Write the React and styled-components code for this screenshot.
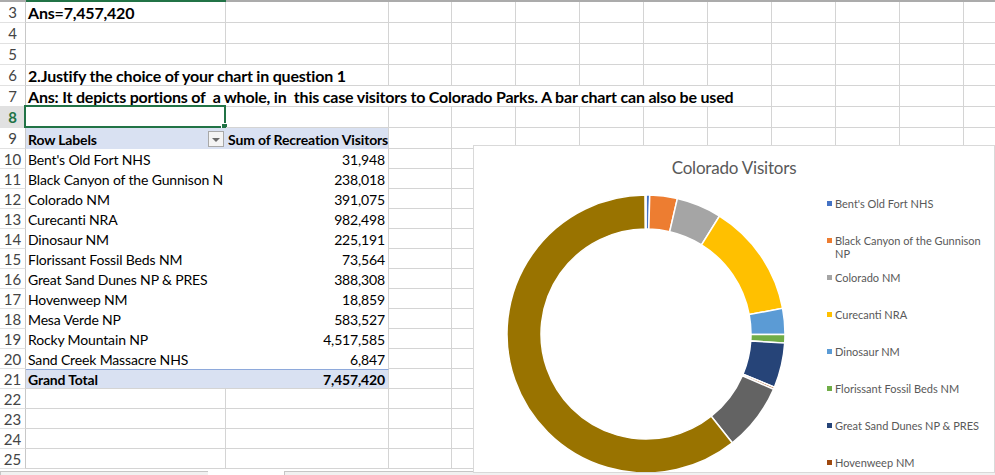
import React from "react";
import styled, { createGlobalStyle } from "styled-components";

const FONT = `"Lato", "Open Sans", sans-serif`;
const COLS = "26px 200px 163px 63px repeat(10, 64px)";
const TOTAL_COLS = 13;
const GRID = "#d4d4d4";
const GREEN = "#217346";
const PIVOT_BG = "#d9e1f2";

const GlobalStyle = createGlobalStyle`
	html, body {
		margin: 0;
		padding: 0;
		background: #ffffff;
	}
	body {
		font-family: ${FONT};
	}
`;

const SHEET = styled.div`
	position: relative;
	width: 995px;
	height: 475px;
	overflow: hidden;
	background: #ffffff;
	font-family: ${FONT};
	color: #000000;
`;

const HEADER_EDGE = styled.div`
	display: grid;
	grid-template-columns: ${COLS};
	height: 2px;
	background: #ababab;
`;

const HEADER_MARK = styled.div`
	grid-column: 2;
	background: ${GREEN};
`;

const ROW = styled.div`
	display: grid;
	grid-template-columns: ${COLS};
	height: ${(p) => p.$h}px;
`;

const ROW_NUM = styled.div`
	display: flex;
	align-items: center;
	justify-content: center;
	box-sizing: border-box;
	border-right: 1px solid #c8c8c8;
	border-bottom: 1px solid #e1e1e1;
	font-size: 15px;
	color: ${(p) => (p.$active ? GREEN : "#444444")};
	font-weight: ${(p) => (p.$active ? 700 : 400)};
	background: ${(p) => (p.$active ? "#e1e1e1" : "#ffffff")};
`;

const CELL = styled.div`
	position: relative;
	grid-column: span ${(p) => p.$span || 1};
	display: flex;
	align-items: center;
	justify-content: ${(p) => (p.$right ? "flex-end" : "space-between")};
	box-sizing: border-box;
	padding: 1px 3px 0 2px;
	white-space: nowrap;
	font-size: ${(p) => (p.$big ? 16 : 14)}px;
	font-weight: ${(p) => (p.$bold ? 700 : 400)};
	letter-spacing: ${(p) => (p.$big ? "-0.2px" : "-0.15px")};
	background: ${(p) => p.$bg || "transparent"};
	border-right: ${(p) => (p.$noRight ? "none" : `1px solid ${GRID}`)};
	border-bottom: ${(p) => (p.$noBottom ? "none" : `1px solid ${GRID}`)};
	border-top: ${(p) => (p.$top ? "1px solid #8ea9db" : "none")};
`;

const SELECTION = styled.div`
	position: absolute;
	left: -2px;
	top: -2px;
	right: -1px;
	bottom: -1px;
	border: 2px solid ${GREEN};
	pointer-events: none;

	&::after {
		content: "";
		position: absolute;
		right: -4px;
		bottom: -4px;
		width: 5px;
		height: 5px;
		background: ${GREEN};
		border: 1px solid #ffffff;
	}
`;

const FILTER_BTN = styled.span`
	display: flex;
	align-items: center;
	justify-content: center;
	width: 14px;
	height: 14px;
	margin-right: -1px;
	border: 1px solid #a8a8a8;
	background: #f4f4f4;

	&::before {
		content: "";
		border-left: 4px solid transparent;
		border-right: 4px solid transparent;
		border-top: 4px solid #6b6b6b;
		margin-top: 1px;
	}
`;

const FOOTER = styled.div`
	display: flex;
	gap: 76px;
	padding-top: 2px;
	height: 6px;
`;

const FOOTER_BAR = styled.div`
	width: ${(p) => (p.$w ? `${p.$w}px` : "auto")};
	flex: ${(p) => (p.$w ? "none" : "1")};
	border-top: 1px solid #c6c6c6;
	border-left: 1px solid #c6c6c6;
	background: #f1f1f1;
`;

/* chart */

const CHART = styled.div`
	position: absolute;
	left: 473px;
	top: 145px;
	width: 522px;
	height: 328px;
	box-sizing: border-box;
	border: 1px solid #d9d9d9;
	background: #ffffff;
	overflow: hidden;
	display: flex;
	flex-direction: column;
`;

const CHART_TITLE = styled.div`
	flex: none;
	height: 43px;
	display: flex;
	align-items: center;
	justify-content: center;
	font-size: 17px;
	color: #595959;
	letter-spacing: -0.2px;
`;

const CHART_BODY = styled.div`
	flex: none;
	display: flex;
	align-items: flex-start;
	height: 283px;
	overflow: hidden;
`;

const PLOT = styled.svg`
	flex: none;
	margin-left: 27px;
	overflow: visible;
`;

const LEGEND = styled.ul`
	list-style: none;
	margin: 0 0 0 36px;
	padding: 0;
	width: 156px;
`;

const LEGEND_ITEM = styled.li`
	display: flex;
	align-items: flex-start;
	height: 37px;
	box-sizing: border-box;
	padding-top: 8px;
	font-size: 11px;
	line-height: 13px;
	color: #595959;
`;

const SWATCH = styled.span`
	flex: none;
	width: 5px;
	height: 5px;
	margin: 4px 3px 0 0;
	background: ${(p) => p.$color};
`;

const parks = [
	["Bent's Old Fort NHS", 31948, "#4472c4"],
	["Black Canyon of the Gunnison N", 238018, "#ed7d31"],
	["Colorado NM", 391075, "#a5a5a5"],
	["Curecanti NRA", 982498, "#ffc000"],
	["Dinosaur NM", 225191, "#5b9bd5"],
	["Florissant Fossil Beds NM", 73564, "#70ad47"],
	["Great Sand Dunes NP & PRES", 388308, "#264478"],
	["Hovenweep NM", 18859, "#9e480e"],
	["Mesa Verde NP", 583527, "#636363"],
	["Rocky Mountain NP", 4517585, "#997300"],
	["Sand Creek Massacre NHS", 6847, "#698ed0"],
];

// the legend shows the full name of the second park; the chart area only has room for eight entries
const legendNames = [
	"Bent's Old Fort NHS",
	"Black Canyon of the Gunnison NP",
	"Colorado NM",
	"Curecanti NRA",
	"Dinosaur NM",
	"Florissant Fossil Beds NM",
	"Great Sand Dunes NP & PRES",
	"Hovenweep NM",
];

const fmt = (n) => n.toLocaleString("en-US");

function arc(cx, cy, r0, r1, a0, a1) {
	const pt = (r, a) => [cx + r * Math.sin(a), cy - r * Math.cos(a)];
	const large = a1 - a0 > Math.PI ? 1 : 0;
	const [x1, y1] = pt(r1, a0);
	const [x2, y2] = pt(r1, a1);
	const [x3, y3] = pt(r0, a1);
	const [x4, y4] = pt(r0, a0);
	return `M${x1} ${y1} A${r1} ${r1} 0 ${large} 1 ${x2} ${y2} L${x3} ${y3} A${r0} ${r0} 0 ${large} 0 ${x4} ${y4} Z`;
}

function Donut() {
	const total = parks.reduce((s, p) => s + p[1], 0);
	let a = 0;
	return (
		<PLOT width="290" height="290" viewBox="0 0 290 290">
			{parks.map(([name, v, color]) => {
				const a0 = a;
				a += (v / total) * Math.PI * 2;
				return (
					<path
						key={name}
						d={arc(145, 145, 105, 139, a0, a)}
						fill={color}
						stroke="#ffffff"
						strokeWidth="1.5"
					/>
				);
			})}
		</PLOT>
	);
}

function Row({ n, h = 20, active, children, used = 0 }) {
	const rest = Array.from({ length: TOTAL_COLS - used });
	return (
		<ROW $h={h}>
			<ROW_NUM $active={active}>{n}</ROW_NUM>
			{children}
			{rest.map((_, i) => (
				<CELL key={i} />
			))}
		</ROW>
	);
}

export default function App() {
	const total = parks.reduce((s, p) => s + p[1], 0);
	return (
		<SHEET>
			<GlobalStyle />
			<HEADER_EDGE>
				<div />
				<HEADER_MARK />
			</HEADER_EDGE>

			<Row n={3} h={21} used={1}>
				<CELL $bold $big>Ans=7,457,420</CELL>
			</Row>
			<Row n={4} h={21} />
			<Row n={5} h={21} />
			<Row n={6} h={21} used={2}>
				<CELL $bold $big $span={2}>2.Justify the choice of your chart in question 1</CELL>
			</Row>
			<Row n={7} h={21} used={8}>
				<CELL $bold $big $span={8}>
					Ans: It depicts portions of &nbsp;a whole, in &nbsp;this case visitors to Colorado Parks. A bar chart can also be used
				</CELL>
			</Row>
			<Row n={8} h={21} active used={1}>
				<CELL>
					<SELECTION />
				</CELL>
			</Row>
			<Row n={9} h={21} used={2}>
				<CELL $bold $bg={PIVOT_BG} $noRight $noBottom>
					Row Labels
					<FILTER_BTN />
				</CELL>
				<CELL $bold $bg={PIVOT_BG} $noBottom>Sum of Recreation Visitors</CELL>
			</Row>
			{parks.map(([name, v], i) => (
				<Row key={name} n={10 + i} used={2}>
					<CELL $noRight $noBottom>{name}</CELL>
					<CELL $right $noBottom>{fmt(v)}</CELL>
				</Row>
			))}
			<Row n={21} used={2}>
				<CELL $bold $bg={PIVOT_BG} $noRight $top>Grand Total</CELL>
				<CELL $bold $right $bg={PIVOT_BG} $top>{fmt(total)}</CELL>
			</Row>
			{[22, 23, 24, 25].map((n) => (
				<Row key={n} n={n} />
			))}

			<FOOTER>
				<FOOTER_BAR $w={207} />
				<FOOTER_BAR />
			</FOOTER>

			<CHART>
				<CHART_TITLE>Colorado Visitors</CHART_TITLE>
				<CHART_BODY>
					<Donut />
					<LEGEND>
						{legendNames.map((name, i) => (
							<LEGEND_ITEM key={name}>
								<SWATCH $color={parks[i][2]} />
								<span>{name}</span>
							</LEGEND_ITEM>
						))}
					</LEGEND>
				</CHART_BODY>
			</CHART>
		</SHEET>
	);
}
